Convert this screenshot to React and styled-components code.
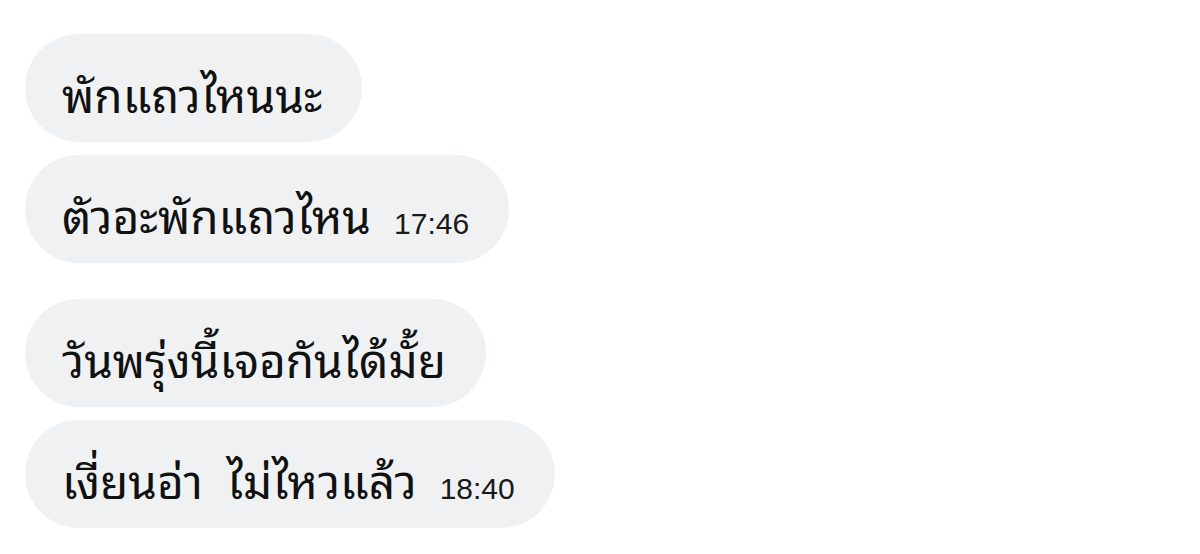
import styled, { createGlobalStyle } from "styled-components";

const GlobalStyle = createGlobalStyle`
  html, body {
    margin: 0;
    padding: 0;
    background: #ffffff;
  }
`;

const Chat = styled.div`
  display: flex;
  flex-direction: column;
  gap: 36px;
  padding: 34px 0 0 25px;
  width: 1200px;
  height: 554px;
  box-sizing: border-box;
  overflow: hidden;
`;

const Group = styled.div`
  display: flex;
  flex-direction: column;
  align-items: flex-start;
  gap: 13px;
`;

const Bubble = styled.div`
  display: inline-flex;
  align-items: baseline;
  gap: 23px;
  height: 108px;
  box-sizing: border-box;
  padding: 10px 40px 0 37px;
  border-radius: 54px;
  background: #eff1f3;
  line-height: 96px;
  font-family: "Noto Sans Thai Looped", "Loma", "Garuda", "Norasi", "Tlwg Typo",
    "Noto Serif Thai", "Noto Sans Thai", "Noto Sans", sans-serif;
  font-size: 46px;
  word-spacing: 12px;
  color: #111111;
`;

const Time = styled.span`
  font-family: "Liberation Sans", Arial, sans-serif;
  font-size: 30px;
  word-spacing: 0;
  color: #1a1a1a;
`;

const groups = [
  [
    { text: "พักแถวไหนนะ" },
    { text: "ตัวอะพักแถวไหน", time: "17:46" },
  ],
  [
    { text: "วันพรุ่งนี้เจอกันได้มั้ย" },
    { text: "เงี่ยนอ่า ไม่ไหวแล้ว", time: "18:40" },
  ],
];

export default function App() {
  return (
    <>
      <GlobalStyle />
      <Chat>
        {groups.map((g, i) => (
          <Group key={i}>
            {g.map((m, j) => (
              <Bubble key={j}>
                <span>{m.text}</span>
                {m.time && <Time>{m.time}</Time>}
              </Bubble>
            ))}
          </Group>
        ))}
      </Chat>
    </>
  );
}
